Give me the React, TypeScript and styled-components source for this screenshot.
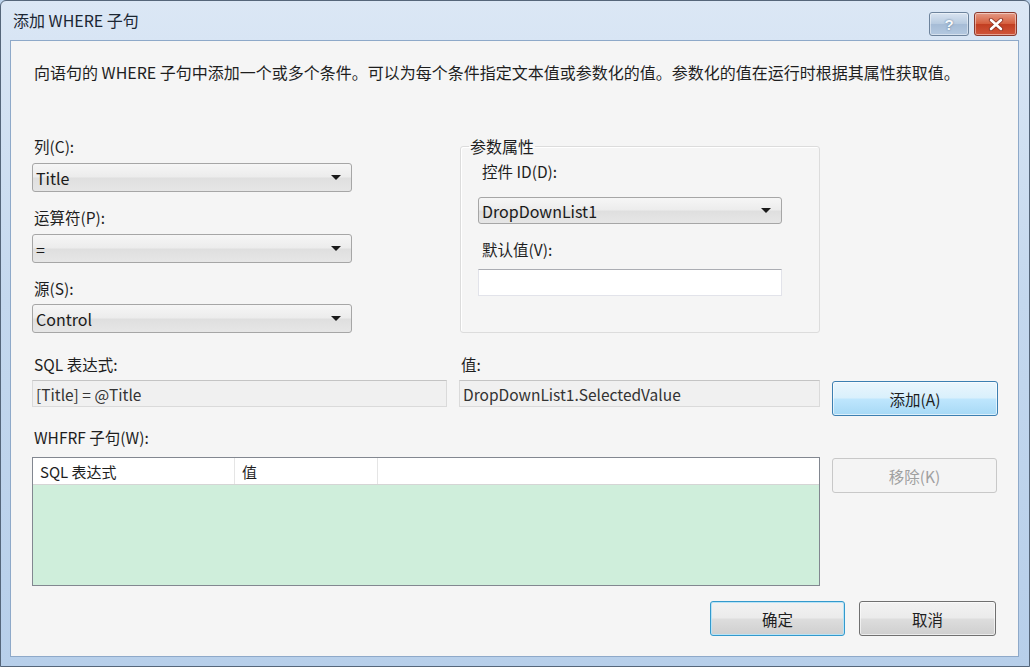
import React from 'react';
import styled, { createGlobalStyle } from 'styled-components';

const GlobalStyle = createGlobalStyle`
  html, body {
    margin: 0;
    padding: 0;
    background: #bcd3ec;
  }
  body {
    font-family: "Noto Sans CJK SC", "Noto Sans", sans-serif;
    font-size: 15px;
    color: #1e1e1e;
  }
`;

const Window = styled('div')`
  width: 1030px;
  height: 667px;
  box-sizing: border-box;
  display: flex;
  flex-direction: column;
  border: 1px solid #55667a;
  border-radius: 6px 6px 0 0;
  background: linear-gradient(180deg, #dbe7f5 0%, #c4d8ee 45%, #b7cfea 100%);
  overflow: hidden;
`;

const TitleBar = styled('div')`
  height: 39px;
  display: flex;
  align-items: center;
  padding: 0 12px 0 12px;
  flex-shrink: 0;
`;

const Title = styled('div')`
  flex: 1;
  font-size: 16px;
  color: #1c2733;
  padding-bottom: 2px;
`;

const CaptionButtons = styled('div')`
  display: flex;
  gap: 5px;
  align-self: flex-start;
  margin-top: 11px;
`;

const CaptionButton = styled('div')<{ $close?: boolean }>`
  width: ${({ $close }) => ($close ? '43px' : '40px')};
  height: 24px;
  box-sizing: border-box;
  border: 1px solid ${({ $close }) => ($close ? '#8a3a2e' : '#6d839c')};
  border-radius: 3px;
  display: flex;
  align-items: center;
  justify-content: center;
  background: ${({ $close }) =>
    $close
      ? 'linear-gradient(180deg, #e49a86 0%, #d5603f 48%, #c23f22 52%, #d0553a 100%)'
      : 'linear-gradient(180deg, #d9e4f1 0%, #b8cbe0 48%, #a6bcd6 52%, #b4c9e0 100%)'};
  box-shadow: inset 0 0 0 1px rgba(255, 255, 255, 0.45);
`;

const HelpMark = styled('span')`
  font-family: "Liberation Sans", sans-serif;
  font-weight: bold;
  font-size: 15px;
  color: #f4f8fc;
  text-shadow: 0 0 2px #55708f;
  line-height: 1;
`;

const Client = styled('div')`
  flex: 1;
  margin: 0 10px 9px 9px;
  background: #f5f5f5;
  border: 1px solid #8ea9c9;
  padding: 21px 20px 0 21px;
  display: flex;
  flex-direction: column;
`;

const Description = styled('div')`
  font-size: 16px;
  line-height: 20px;
  padding-left: 2px;
  margin-bottom: 54px;
`;

const FormRow = styled('div')<{ $gap?: number }>`
  display: grid;
  grid-template-columns: 415px 361px 166px;
  column-gap: 12px;
  margin-bottom: ${({ $gap }) => $gap ?? 0}px;
`;

const Stack = styled('div')`
  display: flex;
  flex-direction: column;
  gap: 15px;
`;

const Field = styled('div')<{ $gap?: number }>`
  display: flex;
  flex-direction: column;
  gap: ${({ $gap }) => $gap ?? 7}px;
`;

const Label = styled('div')<{ $indent?: number }>`
  line-height: 20px;
  font-size: 15.5px;
  padding-left: ${({ $indent }) => $indent ?? 2}px;
`;

const Select = styled('div')<{ $width: number; $height?: number }>`
  width: ${({ $width }) => $width}px;
  height: ${({ $height }) => $height ?? 29}px;
  box-sizing: border-box;
  border: 1px solid #a6a6a6;
  border-radius: 3px;
  background: linear-gradient(180deg, #f6f6f6 0%, #ececec 48%, #dfdfdf 52%, #e6e6e6 100%);
  display: flex;
  align-items: center;
  padding: 0 10px 0 3px;
  font-size: 16px;
  color: #1a1a1a;
`;

const SelectText = styled('span')`
  flex: 1;
`;

const Arrow = styled('span')`
  width: 0;
  height: 0;
  border-left: 5px solid transparent;
  border-right: 5px solid transparent;
  border-top: 5px solid #1a1a1a;
`;

const GroupBox = styled('fieldset')`
  margin: 0 0 0 1px;
  padding: 5px 18px 0 17px;
  border: 1px solid #dcdcdc;
  border-radius: 3px;
  min-width: 0;
  display: flex;
  flex-direction: column;
  box-shadow: inset 1px 1px 0 #ffffff;
`;

const Legend = styled('legend')`
  padding: 0 1px;
  margin-left: -9px;
  font-size: 16px;
  line-height: 20px;
`;

const TextBox = styled('div')<{ $width: number }>`
  width: ${({ $width }) => $width}px;
  height: 27px;
  box-sizing: border-box;
  background: #ffffff;
  border: 1px solid #e2e3ea;
  border-top-color: #abadb3;
`;

const ReadOnlyBox = styled('div')`
  height: 27px;
  box-sizing: border-box;
  background: #f0f0f0;
  border: 1px solid #dadada;
  border-top-color: #c4c4c4;
  display: flex;
  align-items: center;
  padding: 0 3px;
  font-size: 15.5px;
  color: #333333;
`;

const PushButton = styled('div')<{ $variant?: 'hot' | 'default' | 'disabled' }>`
  height: 35px;
  box-sizing: border-box;
  border-radius: 3px;
  display: flex;
  align-items: center;
  justify-content: center;
  font-size: 15.5px;
  border: 1px solid
    ${({ $variant }) =>
      $variant === 'hot' ? '#3c7fb1' : $variant === 'default' ? '#3399cc' : $variant === 'disabled' ? '#c8c8c8' : '#707070'};
  background: ${({ $variant }) =>
    $variant === 'hot'
      ? 'linear-gradient(180deg, #eaf6fd 0%, #d9f0fc 48%, #bee6fd 52%, #a7d9f5 100%)'
      : $variant === 'disabled'
      ? '#f4f4f4'
      : 'linear-gradient(180deg, #f2f2f2 0%, #ebebeb 48%, #dddddd 52%, #cfcfcf 100%)'};
  box-shadow: ${({ $variant }) =>
    $variant === 'disabled' ? 'none' : $variant === 'default' ? 'inset 0 0 0 1px #b8e3f6' : 'inset 0 0 0 1px rgba(255,255,255,0.6)'};
  color: ${({ $variant }) => ($variant === 'disabled' ? '#a0a0a0' : '#1e1e1e')};
`;

const ButtonCell = styled('div')<{ $top?: number; $width?: number }>`
  display: flex;
  flex-direction: column;
  padding-top: ${({ $top }) => $top ?? 0}px;
  ${({ $width }) => ($width ? `width: ${$width}px;` : '')}
`;

const ListView = styled('div')`
  grid-column: 1 / 3;
  height: 129px;
  box-sizing: border-box;
  border: 1px solid #828790;
  background: #cfeedb;
  display: flex;
  flex-direction: column;
`;

const ListHeader = styled('div')`
  height: 27px;
  box-sizing: border-box;
  background: #ffffff;
  border-bottom: 1px solid #d5d5d5;
  display: flex;
`;

const HeaderCell = styled('div')<{ $width?: number }>`
  ${({ $width }) => ($width ? `width: ${$width}px;` : 'flex: 1;')}
  box-sizing: border-box;
  border-right: 1px solid #e5e5e5;
  padding-left: 7px;
  display: flex;
  align-items: center;
  &:last-child {
    border-right: none;
  }
`;

const Footer = styled('div')`
  display: flex;
  justify-content: flex-end;
  gap: 14px;
  margin-top: 15px;
  padding-right: 2px;
`;

const FooterButton = styled(PushButton)<{ $width: number }>`
  width: ${({ $width }) => $width}px;
`;

export default function App() {
  return (
    <>
      <GlobalStyle />
      <Window>
        <TitleBar>
          <Title>添加 WHERE 子句</Title>
          <CaptionButtons>
            <CaptionButton>
              <HelpMark>?</HelpMark>
            </CaptionButton>
            <CaptionButton $close>
              <svg width="16" height="13" viewBox="0 0 16 13">
                <path d="M3 2 L13 11 M13 2 L3 11" stroke="#8a2f1f" strokeWidth="4.2" strokeLinecap="round" />
                <path d="M3 2 L13 11 M13 2 L3 11" stroke="#ffffff" strokeWidth="2.6" strokeLinecap="round" />
              </svg>
            </CaptionButton>
          </CaptionButtons>
        </TitleBar>

        <Client>
          <Description>
            向语句的 WHERE 子句中添加一个或多个条件。可以为每个条件指定文本值或参数化的值。参数化的值在运行时根据其属性获取值。
          </Description>

          <FormRow $gap={21}>
            <Stack>
              <Field>
                <Label>列(C):</Label>
                <Select $width={320}>
                  <SelectText>Title</SelectText>
                  <Arrow />
                </Select>
              </Field>
              <Field>
                <Label>运算符(P):</Label>
                <Select $width={320}>
                  <SelectText>=</SelectText>
                  <Arrow />
                </Select>
              </Field>
              <Field $gap={6}>
                <Label>源(S):</Label>
                <Select $width={320}>
                  <SelectText>Control</SelectText>
                  <Arrow />
                </Select>
              </Field>
            </Stack>

            <GroupBox>
              <Legend>参数属性</Legend>
              <Field $gap={16}>
                <Label $indent={4}>控件 ID(D):</Label>
                <Select $width={304} $height={27}>
                  <SelectText>DropDownList1</SelectText>
                  <Arrow />
                </Select>
              </Field>
              <Field $gap={10} style={{ marginTop: 15 }}>
                <Label $indent={4}>默认值(V):</Label>
                <TextBox $width={304} />
              </Field>
            </GroupBox>
          </FormRow>

          <FormRow $gap={11}>
            <Field $gap={6}>
              <Label>SQL 表达式:</Label>
              <ReadOnlyBox>[Title] = @Title</ReadOnlyBox>
            </Field>
            <Field $gap={6}>
              <Label>值:</Label>
              <ReadOnlyBox>DropDownList1.SelectedValue</ReadOnlyBox>
            </Field>
            <ButtonCell $top={27}>
              <PushButton $variant="hot">添加(A)</PushButton>
            </ButtonCell>
          </FormRow>

          <FormRow $gap={10}>
            <Label>WHFRF 子句(W):</Label>
          </FormRow>

          <FormRow>
            <ListView>
              <ListHeader>
                <HeaderCell $width={202}>SQL 表达式</HeaderCell>
                <HeaderCell $width={143}>值</HeaderCell>
                <HeaderCell />
              </ListHeader>
            </ListView>
            <ButtonCell $top={1} $width={165}>
              <PushButton $variant="disabled">移除(K)</PushButton>
            </ButtonCell>
          </FormRow>

          <Footer>
            <FooterButton $variant="default" $width={135}>
              确定
            </FooterButton>
            <FooterButton $width={137}>取消</FooterButton>
          </Footer>
        </Client>
      </Window>
    </>
  );
}
